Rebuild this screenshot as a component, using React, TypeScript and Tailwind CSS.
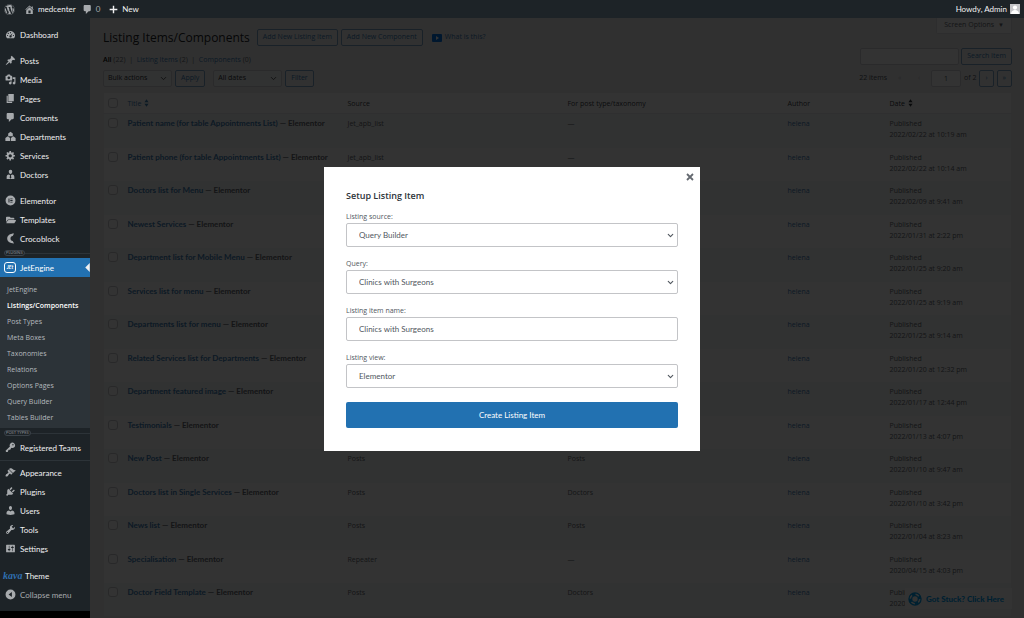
import { useState } from "react";
import type { ReactNode } from "react";
import { ChevronDown } from "lucide-react";
import { FaFolderOpen, FaWordpress } from "react-icons/fa";

const glyphs = {
  home: "M16 8.5l1.53 1.53-1.06 1.06L10 4.6l-6.47 6.49-1.06-1.06L10 2.5l4 4v-2h2v4zm-6-2.46l6 5.99V18H4v-5.97zM12 17v-5H8v5h4z",
  comment: "M5 2h9c1.1 0 2 .9 2 2v7c0 1.1-.9 2-2 2h-2l-5 5v-5H5c-1.1 0-2-.9-2-2V4c0-1.1.9-2 2-2z",
  plus: "M17 8.7v2.6h-5.7V17H8.7v-5.7H3V8.7h5.7V3h2.6v5.7z",
  dashboard:
    "M3.76 17h12.48A8 8 0 1 0 3.76 17zM10 5.5a1.1 1.1 0 1 1 0 2.2 1.1 1.1 0 0 1 0-2.2zM6 7a1.1 1.1 0 1 1 0 2.2A1.1 1.1 0 0 1 6 7zm8 .3L11.6 12.2a2 2 0 1 1-1.4-.7zM4.6 10.7a1.1 1.1 0 1 1 0 2.2 1.1 1.1 0 0 1 0-2.2zm10.8 0a1.1 1.1 0 1 1 0 2.2 1.1 1.1 0 0 1 0-2.2z",
  pin: "M10.44 3.02l1.82-1.82 6.36 6.35-1.83 1.82c-1.05-.68-2.48-.57-3.41.36l-.75.75c-.92.93-1.04 2.35-.35 3.41l-1.83 1.82-2.41-2.41-2.8 2.79c-.42.42-3.38 2.71-3.8 2.29s1.86-3.39 2.28-3.81l2.79-2.79L4.1 9.36l1.83-1.82c1.05.69 2.48.57 3.4-.36l.75-.75c.93-.92 1.05-2.35.36-3.41z",
  media:
    "M13 11V4c0-.55-.45-1-1-1h-1.67L9 1H5L3.67 3H2c-.55 0-1 .45-1 1v7c0 .55.45 1 1 1h10c.55 0 1-.45 1-1zM7 4.5c1.38 0 2.5 1.12 2.5 2.5S8.38 9.5 7 9.5 4.5 8.38 4.5 7 5.62 4.5 7 4.5zM14 6h5v10.5c0 1.38-1.12 2.5-2.5 2.5S14 17.88 14 16.5s1.12-2.5 2.5-2.5c.17 0 .34.02.5.05V9h-3V6zm-4 8.05V13h2v3.5c0 1.38-1.12 2.5-2.5 2.5S7 17.88 7 16.5 8.12 14 9.5 14c.17 0 .34.02.5.05z",
  page: "M6 15V2h10v13H6zm-1 1h8v2H3V5h2v11z",
  departments: "M10 1.5l4.2 3v5H5.8v-5zM5 9.5l4.3 3V18H.7v-5.5zM15 9.5l4.3 3V18h-8.6v-5.5z",
  gear: "M18 12h-2.18c-.17.7-.44 1.35-.81 1.93l1.54 1.54-2.1 2.1-1.54-1.54c-.58.36-1.23.63-1.91.79V19H8v-2.18c-.68-.16-1.33-.43-1.91-.79l-1.54 1.54-2.12-2.12 1.54-1.54c-.36-.58-.63-1.23-.79-1.91H1V9.03h2.17c.16-.7.44-1.35.8-1.94L2.43 5.55l2.1-2.1 1.54 1.54c.58-.37 1.24-.64 1.93-.81V2h3v2.18c.68.16 1.33.43 1.91.79l1.54-1.54 2.12 2.12-1.54 1.54c.36.59.64 1.24.8 1.94H18V12zm-8.5 1.5c1.66 0 3-1.34 3-3s-1.34-3-3-3-3 1.34-3 3 1.34 3 3 3z",
  doctor:
    "M10 1.5a3.2 3.2 0 0 1 3.2 3.5c-.2 2.1-1.4 4-3.2 4S7 7.1 6.8 5A3.2 3.2 0 0 1 10 1.5zM7 10l2.3 1.2L8.5 16l1.5 1.5 1.5-1.5-.8-4.8L13 10c2.8.4 4 2.3 4 4.5V18H3v-3.5C3 12.3 4.2 10.4 7 10z",
  elementor:
    "M10 1a9 9 0 1 0 0 18 9 9 0 0 0 0-18zM6.4 6.2h1.7v7.6H6.4zM9.6 6.2h4.2v1.6H9.6zM9.6 9.2h4.2v1.6H9.6zM9.6 12.2h4.2v1.6H9.6z",
  croco: "M16.5 1C8.5 1 4 5 4 10s4.5 9 12.5 9l-2.5-4.5C11.5 14 10 12.5 10 10s1.5-4 4-4.5z",
  key: "M16.95 2.58c1.96 1.95 1.96 5.12 0 7.07-1.51 1.51-3.75 1.84-5.59 1.01l-1.87 3.31-2.99.31L5 18H2l-1-2 7.95-7.69c-.92-1.87-.62-4.18.93-5.73 1.95-1.96 5.12-1.96 7.07 0zm-2.51 3.79c.74 0 1.33-.6 1.33-1.34 0-.73-.59-1.33-1.33-1.33-.73 0-1.33.6-1.33 1.33 0 .74.6 1.34 1.33 1.34z",
  brush:
    "M14.48 11.06L7.41 3.99l1.5-1.5c.5-.56 2.3-.47 3.51.32 1.21.8 1.43 1.28 2.91 2.1 1.18.64 2.45 1.26 4.45.85zm-.71.71L6.7 4.7 4.93 6.47c-.39.39-.39 1.02 0 1.41l1.06 1.06c.39.39.39 1.03 0 1.42-.6.6-1.43 1.11-2.21 1.69-.35.26-.7.53-1.01.84C1.43 14.23.4 16.08 1.4 17.07c.99 1 2.84-.03 4.18-1.36.31-.31.58-.66.85-1.02.57-.78 1.08-1.61 1.69-2.21.39-.39 1.02-.39 1.41 0l1.06 1.06c.39.39 1.02.39 1.41 0z",
  plug: "M13.11 4.36L9.87 7.6 8 5.73l3.24-3.24c.35-.34 1.05-.2 1.56.32.52.51.66 1.21.31 1.55zm-8 1.77l.91-1.12 9.01 9.01-1.19.84c-.71.71-2.63 1.16-3.82 1.16H6.14L4.9 17.26c-.59.59-1.54.59-2.12 0-.59-.58-.59-1.53 0-2.12l1.24-1.24v-3.88c0-1.13.4-3.19 1.09-3.89zm7.26 3.97l3.24-3.24c.34-.35 1.04-.21 1.55.31.52.51.66 1.21.31 1.55l-3.24 3.25z",
  user: "M10 9.25c-2.27 0-2.73-3.44-2.73-3.44C7 4.02 7.82 2 9.97 2c2.16 0 2.98 2.02 2.71 3.81 0 0-.41 3.44-2.68 3.44zm0 2.57L12.72 10c2.39 0 4.52 2.33 4.52 4.53v2.49s-3.65 1.13-7.24 1.13c-3.65 0-7.24-1.13-7.24-1.13v-2.49c0-2.25 1.94-4.48 4.47-4.48z",
  wrench:
    "M16.68 9.77c-1.34 1.34-3.3 1.67-4.95.99l-5.41 6.52c-.99.99-2.59.99-3.58 0s-.99-2.59 0-3.57l6.52-5.42c-.68-1.65-.35-3.61.99-4.95 1.28-1.28 3.12-1.62 4.72-1.06l-2.89 2.89 2.82 2.82 2.86-2.87c.53 1.58.18 3.39-1.08 4.65zM3.81 16.21c.4.39 1.04.39 1.43 0 .4-.4.4-1.04 0-1.43-.39-.4-1.03-.4-1.43 0-.39.39-.39 1.03 0 1.43z",
  sliders:
    "M18 16V4c0-.55-.45-1-1-1H3c-.55 0-1 .45-1 1v12c0 .55.45 1 1 1h14c.55 0 1-.45 1-1zM8 11h1c.55 0 1 .45 1 1s-.45 1-1 1H8v1.5c0 .28-.22.5-.5.5s-.5-.22-.5-.5V13H6c-.55 0-1-.45-1-1s.45-1 1-1h1V5.5c0-.28.22-.5.5-.5s.5.22.5.5V11zm5-2h-1c-.55 0-1-.45-1-1s.45-1 1-1h1V5.5c0-.28.22-.5.5-.5s.5.22.5.5V7h1c.55 0 1 .45 1 1s-.45 1-1 1h-1v5.5c0 .28-.22.5-.5.5s-.5-.22-.5-.5V9z",
  collapse: "M10 1a9 9 0 1 0 0 18 9 9 0 0 0 0-18zM12.5 5.5v9L6.5 10z",
};

type GlyphName = keyof typeof glyphs;

function Glyph({ name, className = "size-[11px]" }: { name: GlyphName; className?: string }) {
  return (
    <svg viewBox="0 0 20 20" fill="currentColor" fillRule="evenodd" aria-hidden="true" className={className}>
      <path d={glyphs[name]} />
    </svg>
  );
}

function MenuItem({ icon, label }: { icon: ReactNode; label: string }) {
  return (
    <a href="#" className="flex h-[19px] items-center gap-1 pl-[5px] whitespace-nowrap text-[#f0f0f1]">
      <span className="flex w-[11px] shrink-0 justify-center text-[#a7aaad]">{icon}</span>
      {label}
    </a>
  );
}

function SectionMark({ label }: { label: string }) {
  return (
    <div className="flex h-[10px] items-center pl-1">
      <span className="rounded-sm border border-[#3c434a] px-px text-[4px] leading-[4px] text-[#8c8f94]">{label}</span>
      <span className="h-px flex-1 bg-[#2c3338]" />
    </div>
  );
}

const submenu = [
  "JetEngine",
  "Listings/Components",
  "Post Types",
  "Meta Boxes",
  "Taxonomies",
  "Relations",
  "Options Pages",
  "Query Builder",
  "Tables Builder",
];

function Sidebar() {
  return (
    <nav aria-label="Main menu" className="relative z-20 w-[90px] shrink-0 bg-black font-['Lato',sans-serif] text-[8px]">
      <div className="bg-[#1d2327] pt-[7px] pb-[7px]">
        <MenuItem icon={<Glyph name="dashboard" />} label="Dashboard" />
        <div className="pt-[7px]">
          <MenuItem icon={<Glyph name="pin" />} label="Posts" />
          <MenuItem icon={<Glyph name="media" />} label="Media" />
          <MenuItem icon={<Glyph name="page" />} label="Pages" />
          <MenuItem icon={<Glyph name="comment" />} label="Comments" />
          <MenuItem icon={<Glyph name="departments" />} label="Departments" />
          <MenuItem icon={<Glyph name="gear" />} label="Services" />
          <MenuItem icon={<Glyph name="doctor" />} label="Doctors" />
        </div>
        <div className="pt-[7px]">
          <MenuItem icon={<Glyph name="elementor" />} label="Elementor" />
          <MenuItem icon={<FaFolderOpen className="size-[10px]" />} label="Templates" />
          <MenuItem icon={<Glyph name="croco" />} label="Crocoblock" />
        </div>
        <SectionMark label="PLUGINS" />
        <a href="#" aria-current="page" className="flex h-[19px] items-center gap-1 bg-[#2271b1] pl-1 text-white">
          <span className="flex h-[11px] w-3 items-center justify-center rounded-[3px] border border-white text-[5px] leading-none font-bold italic">
            JEt
          </span>
          <span className="flex-1">JetEngine</span>
          <svg viewBox="0 0 5 10" fill="#f0f0f1" aria-hidden="true" className="h-[9px] w-[5px]">
            <path d="M5 0v10L0 5z" />
          </svg>
        </a>
        <ul className="bg-[#2c3338] pt-[5px] pb-[2px] font-['Open_Sans',sans-serif] text-[7px]">
          {submenu.map((label) => (
            <li key={label}>
              <a
                href="#"
                className={
                  label === "Listings/Components"
                    ? "flex h-4 items-center pl-[7px] font-semibold whitespace-nowrap text-white"
                    : "flex h-4 items-center pl-[7px] whitespace-nowrap text-[#b4b9be]"
                }
              >
                {label}
              </a>
            </li>
          ))}
        </ul>
        <SectionMark label="POST TYPES" />
        <MenuItem icon={<Glyph name="key" />} label="Registered Teams" />
        <div className="flex h-[6px] items-center">
          <span className="h-px flex-1 bg-[#2c3338]" />
        </div>
        <MenuItem icon={<Glyph name="brush" />} label="Appearance" />
        <MenuItem icon={<Glyph name="plug" />} label="Plugins" />
        <MenuItem icon={<Glyph name="user" />} label="Users" />
        <MenuItem icon={<Glyph name="wrench" />} label="Tools" />
        <MenuItem icon={<Glyph name="sliders" />} label="Settings" />
        <a href="#" className="mt-[8px] flex h-[19px] items-center gap-[3px] pl-[3px] text-[#f0f0f1]">
          <span className="w-[19px] font-['Liberation_Serif',serif] text-[10px] leading-none font-bold text-[#2f6fb0] italic">
            kava
          </span>
          Theme
        </a>
        <button type="button" className="flex h-[19px] w-full items-center gap-1 pl-[5px] text-[#a7aaad]">
          <Glyph name="collapse" />
          Collapse menu
        </button>
      </div>
    </nav>
  );
}

function AdminBar() {
  return (
    <header className="relative z-20 flex h-[18px] shrink-0 items-center bg-[#1d2327] px-1 font-['Lato',sans-serif] text-[8px] text-[#f0f0f1]">
      <a href="#" aria-label="About WordPress" className="text-[#a7aaad]">
        <FaWordpress className="size-[11px]" />
      </a>
      <a href="#" className="ml-[9px] flex items-center gap-[3px]">
        <Glyph name="home" className="size-[11px] text-[#a7aaad]" />
        medcenter
      </a>
      <a href="#" aria-label="0 comments" className="ml-[6px] flex items-center gap-[3px] text-[#a7aaad]">
        <Glyph name="comment" />0
      </a>
      <a href="#" className="ml-2 flex items-center gap-[3px]">
        <Glyph name="plus" />
        New
      </a>
      <a href="#" className="ml-auto flex items-center gap-[3px]">
        Howdy, Admin
        <svg viewBox="0 0 10 10" aria-hidden="true" className="size-[10px]">
          <rect width="10" height="10" fill="#c3c4c7" />
          <circle cx="5" cy="3.6" r="2.1" fill="#fff" />
          <path d="M1 10c0-3 2-4 4-4s4 1 4 4z" fill="#fff" />
        </svg>
      </a>
    </header>
  );
}

const outlineButton =
  "flex h-[17px] items-center rounded-xs border border-[#7fa6c6] bg-[#f3f5f6] px-[5px] text-[7px] whitespace-nowrap text-[#3f80b5]";

function FilterSelect({ label, option }: { label: string; option: string }) {
  return (
    <div className="relative w-[69px]">
      <select
        aria-label={label}
        className="block h-[17px] w-full appearance-none rounded-xs border border-[#d2d3d6] bg-[#f6f7f7] pl-1 text-[7px] text-[#2c3338]"
      >
        <option>{option}</option>
      </select>
      <ChevronDown aria-hidden="true" className="pointer-events-none absolute top-1 right-1 size-[9px] text-[#2c3338]" />
    </div>
  );
}

type Listing = { title: string; source?: string; target?: string; date: string };

const listings: Listing[] = [
  { title: "Patient name (for table Appointments List)", source: "Jet_apb_list", target: "—", date: "2022/02/22 at 10:19 am" },
  { title: "Patient phone (for table Appointments List)", source: "Jet_apb_list", target: "—", date: "2022/02/22 at 10:14 am" },
  { title: "Doctors list for Menu", date: "2022/02/09 at 9:41 am" },
  { title: "Newest Services", date: "2022/01/31 at 2:22 pm" },
  { title: "Department list for Mobile Menu", date: "2022/01/25 at 9:20 am" },
  { title: "Services list for menu", date: "2022/01/25 at 9:19 am" },
  { title: "Departments list for menu", date: "2022/01/25 at 9:14 am" },
  { title: "Related Services list for Departments", date: "2022/01/20 at 12:32 pm" },
  { title: "Department featured image", date: "2022/01/17 at 12:44 pm" },
  { title: "Testimonials", date: "2022/01/13 at 4:07 pm" },
  { title: "New Post", source: "Posts", target: "Posts", date: "2022/01/10 at 9:47 am" },
  { title: "Doctors list in Single Services", source: "Posts", target: "Doctors", date: "2022/01/10 at 3:42 pm" },
  { title: "News list", source: "Posts", target: "Posts", date: "2022/01/04 at 8:23 am" },
  { title: "Specialisation", source: "Repeater", target: "—", date: "2020/04/15 at 4:03 pm" },
  { title: "Doctor Field Template", source: "Posts", target: "Doctors", date: "2020" },
];

const checkbox = "block size-[10px] appearance-none rounded-[3px] border border-[#c8c9cc] bg-white";

function SortMark() {
  return (
    <svg viewBox="0 0 6 9" fill="currentColor" aria-hidden="true" className="h-[8px] w-[5px]">
      <path d="M3 0l2.5 3.5H.5zM3 9L.5 5.5h5z" />
    </svg>
  );
}

function ListingTable() {
  return (
    <table className="mt-[5px] w-full table-fixed border border-[#f0f0f1] bg-white text-left text-[7px] leading-[11px] text-[#646970]">
      <colgroup>
        <col className="w-6" />
        <col />
        <col />
        <col />
        <col className="w-[102px]" />
        <col className="w-[122px]" />
      </colgroup>
      <thead>
        <tr className="h-[21px] border-b border-[#ececee] text-[#3c434a]">
          <th className="pl-1">
            <input type="checkbox" aria-label="Select all" className={checkbox} />
          </th>
          <th className="font-normal">
            <a href="#" className="flex items-center gap-[3px] text-[#3f80b5]">
              Title
              <SortMark />
            </a>
          </th>
          <th className="font-normal">Source</th>
          <th className="font-normal">For post type/taxonomy</th>
          <th className="font-normal">Author</th>
          <th className="font-normal">
            <a href="#" className="flex items-center gap-[3px] text-[#2c3338]">
              Date
              <SortMark />
            </a>
          </th>
        </tr>
      </thead>
      <tbody>
        {listings.map((row) => (
          <tr key={row.title} className="align-top odd:h-[34px] odd:bg-[#f6f7f7] even:h-[33px]">
            <td className="pt-1 pl-1">
              <input type="checkbox" aria-label={`Select ${row.title}`} className={checkbox} />
            </td>
            <td className="pt-1 font-['Lato',sans-serif] text-[8px] font-bold whitespace-nowrap">
              <a href="#" className="text-[#3f80b5]">
                {row.title}
              </a>{" "}
              — Elementor
            </td>
            <td className="pt-1">{row.source}</td>
            <td className="pt-1">{row.target}</td>
            <td className="pt-1">
              <a href="#" className="text-[#3f80b5]">
                helena
              </a>
            </td>
            <td className="pt-1">
              Published
              <br />
              {row.date}
            </td>
          </tr>
        ))}
      </tbody>
    </table>
  );
}

function ListingPage() {
  return (
    <main className="min-w-0 flex-1 bg-[#f0f0f1] pr-3 pl-[13px]">
      <div className="flex items-start gap-[7px]">
        <h1 className="mt-[11px] text-[12px] leading-[17px] whitespace-nowrap text-[#1d2327]">Listing Items/Components</h1>
        <div className="mt-[11px] flex gap-[3px]">
          <a href="#" className={outlineButton}>
            Add New Listing Item
          </a>
          <a href="#" className={outlineButton}>
            Add New Component
          </a>
        </div>
        <a href="#" className="mt-[11px] ml-[2px] flex h-[17px] items-center gap-[3px] text-[7px] text-[#3f80b5]">
          <svg viewBox="0 0 10 8" aria-hidden="true" className="h-2 w-[10px]">
            <rect width="10" height="8" rx="1" fill="#0073e6" />
            <path d="M4 2l3 2-3 2z" fill="#fff" />
          </svg>
          What is this?
        </a>
        <button
          type="button"
          className="ml-auto flex h-4 items-center gap-1 rounded-b-xs border border-t-0 border-[#e2e2e4] bg-white px-[7px] text-[7px] whitespace-nowrap text-[#646970]"
        >
          Screen Options <span className="text-[6px]">▼</span>
        </button>
      </div>
      <div className="mt-[2px] flex h-[17px] items-end justify-between text-[7px]">
        <p className="leading-[11px] text-[#646970]">
          <a href="#" className="font-semibold text-black">
            All
          </a>{" "}
          (22) &nbsp;|&nbsp;{" "}
          <a href="#" className="text-[#3f80b5]">
            Listing Items
          </a>{" "}
          (2) &nbsp;|&nbsp;{" "}
          <a href="#" className="text-[#3f80b5]">
            Components
          </a>{" "}
          (0)
        </p>
        <form className="flex gap-[2px]" onSubmit={(event) => event.preventDefault()}>
          <input
            type="search"
            aria-label="Search items"
            className="h-[17px] w-[99px] rounded-xs border border-[#d2d3d6] bg-white px-1"
          />
          <button type="submit" className={outlineButton}>
            Search Item
          </button>
        </form>
      </div>
      <div className="mt-[5px] flex items-center gap-[3px]">
        <FilterSelect label="Bulk actions" option="Bulk actions" />
        <button type="button" className={outlineButton}>
          Apply
        </button>
        <div className="ml-[5px]">
          <FilterSelect label="Filter by date" option="All dates" />
        </div>
        <button type="button" className={outlineButton}>
          Filter
        </button>
        <div className="ml-auto flex items-center gap-[3px] text-[7px] text-[#50575e]">
          <span className="mr-2">22 items</span>
          <span className="w-[17px] text-[#c3c4c7]">«</span>
          <span className="w-[10px] text-[#c3c4c7]">‹</span>
          <input
            aria-label="Current page"
            defaultValue="1"
            className="h-[17px] w-[30px] rounded-xs border border-[#d2d3d6] bg-white text-center"
          />
          <span>of 2</span>
          <button type="button" aria-label="Next page" className={outlineButton}>
            ›
          </button>
          <button type="button" aria-label="Last page" className={outlineButton}>
            »
          </button>
        </div>
      </div>
      <ListingTable />
    </main>
  );
}

const fieldBox =
  "block h-6 w-full appearance-none rounded-xs border border-[#c3c4c7] bg-white px-3 font-['Lato',sans-serif] text-[8px] text-[#50575e]";

function SelectField({ id, label, option }: { id: string; label: string; option: string }) {
  return (
    <div>
      <label htmlFor={id} className="block text-[7px] leading-[13px] text-[#50575e]">
        {label}
      </label>
      <div className="relative">
        <select id={id} className={fieldBox}>
          <option>{option}</option>
        </select>
        <ChevronDown
          aria-hidden="true"
          strokeWidth={3}
          className="pointer-events-none absolute top-2 right-[3px] size-[9px] text-[#50575e]"
        />
      </div>
    </div>
  );
}

function SetupDialog() {
  const [name, setName] = useState("Clinics with Surgeons");
  return (
    <div className="fixed inset-0 z-10 flex items-center justify-center bg-black/80">
      <form
        role="dialog"
        aria-labelledby="dialog-title"
        className="relative w-[376px] bg-white px-[22px] pt-[22px] pb-[23px]"
        onSubmit={(event) => event.preventDefault()}
      >
        <button type="button" aria-label="Close" className="absolute top-[6px] right-[6px] text-[#646970]">
          <svg viewBox="0 0 8 8" stroke="currentColor" strokeWidth="1.8" aria-hidden="true" className="size-2">
            <path d="M1 1l6 6M7 1L1 7" />
          </svg>
        </button>
        <h2 id="dialog-title" className="mb-[7px] text-[9px] leading-[14px] font-semibold text-[#2c3338]">
          Setup Listing Item
        </h2>
        <div className="flex flex-col gap-[10px]">
          <SelectField id="source" label="Listing source:" option="Query Builder" />
          <SelectField id="query" label="Query:" option="Clinics with Surgeons" />
          <div>
            <label htmlFor="name" className="block text-[7px] leading-[13px] text-[#50575e]">
              Listing item name:
            </label>
            <input id="name" value={name} onChange={(event) => setName(event.target.value)} className={fieldBox} />
          </div>
          <SelectField id="view" label="Listing view:" option="Elementor" />
        </div>
        <button
          type="submit"
          className="mt-[14px] h-[26px] w-full rounded-xs bg-[#2271b1] font-['Lato',sans-serif] text-[8px] text-white"
        >
          Create Listing Item
        </button>
      </form>
    </div>
  );
}

function HelpBadge() {
  return (
    <a
      href="#"
      className="fixed right-3 bottom-[9px] flex h-[21px] items-center gap-1 bg-white pr-2 pl-[3px] font-['Lato',sans-serif] text-[8px] font-black whitespace-nowrap text-[#00a0f0]"
    >
      <svg viewBox="0 0 14 14" aria-hidden="true" className="size-[14px]">
        <circle cx="7" cy="7" r="4.7" fill="none" stroke="#00a0f0" strokeWidth="4" />
        <circle cx="7" cy="7" r="4.7" fill="none" stroke="#fff" strokeWidth="1.5" strokeDasharray="3.7 3.68" />
      </svg>
      Got Stuck? Click Here
    </a>
  );
}

export default function App() {
  return (
    <div className="flex h-screen flex-col overflow-hidden bg-[#f0f0f1] font-['Open_Sans','Noto_Sans',sans-serif]">
      <AdminBar />
      <div className="flex min-h-0 flex-1">
        <Sidebar />
        <ListingPage />
      </div>
      <HelpBadge />
      <SetupDialog />
    </div>
  );
}
